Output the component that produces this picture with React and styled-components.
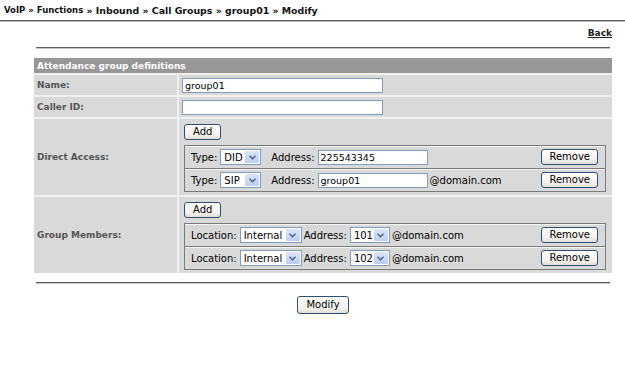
import React from 'react';
import styled, { createGlobalStyle } from 'styled-components';

const GlobalStyle = createGlobalStyle`
  body {
    margin: 0;
    background: #ffffff;
    font-family: 'DejaVu Sans', Verdana, sans-serif;
    color: #000000;
  }
`;

const Breadcrumb = styled.div`
  height: 20px;
  padding: 0 4px;
  display: flex;
  align-items: center;
  font-weight: bold;
  font-size: 9.4px;
  color: #111;
  border-bottom: 1px solid #5f5f5f;
  box-shadow: 0 1px 0 #b9b9b9;
  white-space: pre;
`;

const CrumbSmall = styled.span`
  font-size: 8.5px;
`;

const Content = styled.div`
  padding: 0 13px 0 34px;
`;

const BackRow = styled.div`
  display: flex;
  justify-content: flex-end;
  padding-top: 7px;
  height: 19px;
  box-sizing: border-box;
`;

const BackLink = styled.a`
  font-size: 9px;
  font-weight: bold;
  color: #222;
  text-decoration: underline;
`;

const Rule = styled.div`
  margin: ${p => p.$mt || 7}px 2px 0;
  border-top: 1px solid #5f5f5f;
  border-bottom: 1px solid #c4c4c4;
`;

const Table = styled.div`
  margin-top: 9px;
  display: grid;
  grid-template-columns: 143px 1fr;
  gap: 2px;
  background: #f0f0f0;
`;

const HeaderCell = styled.div`
  grid-column: 1 / -1;
  background: #979797;
  color: #fff;
  font-weight: bold;
  font-size: 9px;
  height: 15px;
  display: flex;
  align-items: center;
  padding-left: 3px;
`;

const LabelCell = styled.div`
  background: #d9d9d9;
  color: #555;
  font-weight: bold;
  font-size: 9px;
  display: flex;
  align-items: center;
  padding-left: 3px;
`;

const ValueCell = styled.div`
  background: #d9d9d9;
  display: flex;
  flex-direction: column;
  align-items: ${p => (p.$block ? 'stretch' : 'flex-start')};
  padding: ${p => (p.$block ? '5px 6px 3px 5px' : '3px 3px 2px 3px')};
`;

const TextInput = styled.input`
  box-sizing: border-box;
  width: ${p => p.$w || 201}px;
  height: 15px;
  margin: 0 0 0 ${p => p.$ml || 0}px;
  padding: 0 2px;
  border: 1px solid #7f9db9;
  background: #fff;
  font-family: 'DejaVu Sans', Verdana, sans-serif;
  font-size: 9.5px;
  color: #000;
  display: block;
`;

const Button = styled.button`
  box-sizing: border-box;
  height: ${p => p.$h || 16}px;
  padding: 0 ${p => p.$px || 7}px;
  border: 1px solid #2d4f77;
  border-radius: 3px;
  background: linear-gradient(#ffffff, #f2f1ec 70%, #e1ded3);
  font-family: 'DejaVu Sans', Verdana, sans-serif;
  font-size: 10px;
  color: #000;
  line-height: 1;
  cursor: pointer;
  align-self: ${p => (p.$right ? 'center' : 'flex-start')};
  margin-left: ${p => (p.$right ? 'auto' : '0')};
`;

const Entries = styled.div`
  margin-top: 5px;
  border: 1px solid #7a7a7a;
  border-top: none;
`;

const EntryRow = styled.div`
  display: flex;
  align-items: center;
  height: 22px;
  padding: 0 7px 0 6px;
  border-top: 1px solid #7a7a7a;
  box-shadow: inset 0 1px 0 #f4f4f4;
  font-size: 10px;
  color: #000;
`;

const Label = styled.span`
  margin-left: ${p => p.$ml || 0}px;
  white-space: pre;
`;

const SelectBox = styled.div`
  box-sizing: border-box;
  width: ${p => p.$w}px;
  height: 16px;
  margin-left: ${p => p.$ml || 0}px;
  border: 1px solid #7f9db9;
  background: #fff;
  display: flex;
  align-items: stretch;
  font-size: 10px;
`;

const SelectValue = styled.span`
  flex: 1;
  padding-left: 3px;
  display: flex;
  align-items: center;
`;

const SelectArrow = styled.span`
  width: 14px;
  margin: 1px;
  background: linear-gradient(#dbe5fb, #bccdf5);
  border-radius: 1px;
  display: flex;
  align-items: center;
  justify-content: center;
`;

const Domain = styled.span`
  margin-left: 2px;
`;

const Footer = styled.div`
  display: flex;
  justify-content: center;
  margin-top: 12px;
`;

const Select = ({ value, w, ml }) => (
  <SelectBox $w={w} $ml={ml}>
    <SelectValue>{value}</SelectValue>
    <SelectArrow>
      <svg width="7" height="5" viewBox="0 0 7 5">
        <polyline points="0.5,0.8 3.5,3.8 6.5,0.8" fill="none" stroke="#4d6185" strokeWidth="1.5" />
      </svg>
    </SelectArrow>
  </SelectBox>
);

const directAccess = [
  { type: 'DID', address: '225543345', domain: false },
  { type: 'SIP', address: 'group01', domain: true },
];

const members = [
  { location: 'Internal', address: '101' },
  { location: 'Internal', address: '102' },
];

export default function App() {
  return (
    <>
      <GlobalStyle />
      <Breadcrumb>
        <CrumbSmall>VoIP » Functions</CrumbSmall>
        {' » Inbound » Call Groups » group01 » Modify'}
      </Breadcrumb>
      <Content>
        <BackRow>
          <BackLink href="#">Back</BackLink>
        </BackRow>
        <Rule />
        <Table>
          <HeaderCell>Attendance group definitions</HeaderCell>

          <LabelCell>Name:</LabelCell>
          <ValueCell>
            <TextInput defaultValue="group01" />
          </ValueCell>

          <LabelCell>Caller ID:</LabelCell>
          <ValueCell>
            <TextInput defaultValue="" />
          </ValueCell>

          <LabelCell>Direct Access:</LabelCell>
          <ValueCell $block>
            <Button $px={8}>Add</Button>
            <Entries>
              {directAccess.map(row => (
                <EntryRow key={row.type}>
                  <Label>Type:</Label>
                  <Select value={row.type} w={41} ml={3} />
                  <Label $ml={10}>Address:</Label>
                  <TextInput $w={110} $ml={3} defaultValue={row.address} />
                  {row.domain && <Domain>@domain.com</Domain>}
                  <Button $right>Remove</Button>
                </EntryRow>
              ))}
            </Entries>
          </ValueCell>

          <LabelCell>Group Members:</LabelCell>
          <ValueCell $block>
            <Button $px={8}>Add</Button>
            <Entries>
              {members.map(row => (
                <EntryRow key={row.address}>
                  <Label>Location:</Label>
                  <Select value={row.location} w={62} ml={3} />
                  <Label $ml={2}>Address:</Label>
                  <Select value={row.address} w={40} ml={3} />
                  <Domain>@domain.com</Domain>
                  <Button $right>Remove</Button>
                </EntryRow>
              ))}
            </Entries>
          </ValueCell>
        </Table>
        <Rule $mt={9} />
        <Footer>
          <Button $h={18} $px={8}>Modify</Button>
        </Footer>
      </Content>
    </>
  );
}
